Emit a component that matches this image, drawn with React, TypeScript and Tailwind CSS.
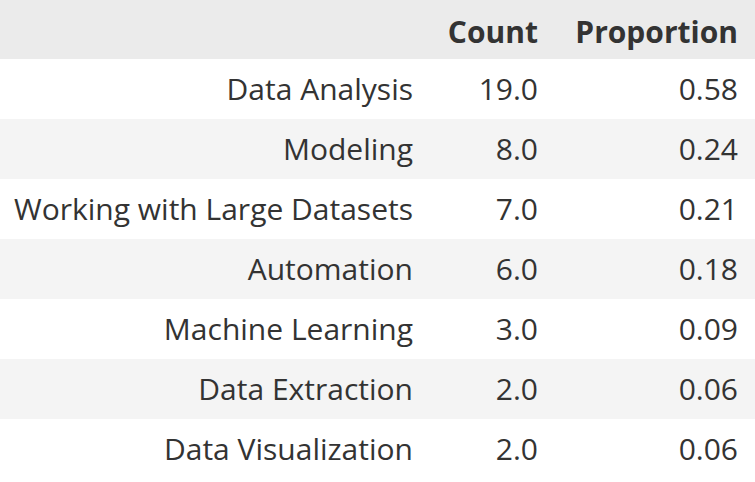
const rows = [
  { label: 'Data Analysis', count: '19.0', prop: '0.58' },
  { label: 'Modeling', count: '8.0', prop: '0.24' },
  { label: 'Working with Large Datasets', count: '7.0', prop: '0.21' },
  { label: 'Automation', count: '6.0', prop: '0.18' },
  { label: 'Machine Learning', count: '3.0', prop: '0.09' },
  { label: 'Data Extraction', count: '2.0', prop: '0.06' },
  { label: 'Data Visualization', count: '2.0', prop: '0.06' },
]

export default function App() {
  return (
    <div
      className="w-[755px] bg-white text-[#333333] text-[30px] leading-none"
      style={{ fontFamily: '"Open Sans", "Noto Sans", sans-serif' }}
    >
      {/* Header */}
      <div className="grid grid-cols-[430px_125px_200px] h-[59px] items-center bg-[#ebebeb] font-bold pt-[4px]">
        <div />
        <div className="text-right pr-[17px]">Count</div>
        <div className="text-right pr-[17px]">Proportion</div>
      </div>

      {rows.map((row, i) => (
        <div
          key={row.label}
          className={`grid grid-cols-[430px_125px_200px] h-[60px] items-center ${i % 2 === 0 ? 'bg-white' : 'bg-[#f4f4f4]'}`}
        >
          <div className="text-right pr-[17px] whitespace-nowrap">{row.label}</div>
          <div className="text-right pr-[17px]">{row.count}</div>
          <div className="text-right pr-[17px]">{row.prop}</div>
        </div>
      ))}
    </div>
  )
}
